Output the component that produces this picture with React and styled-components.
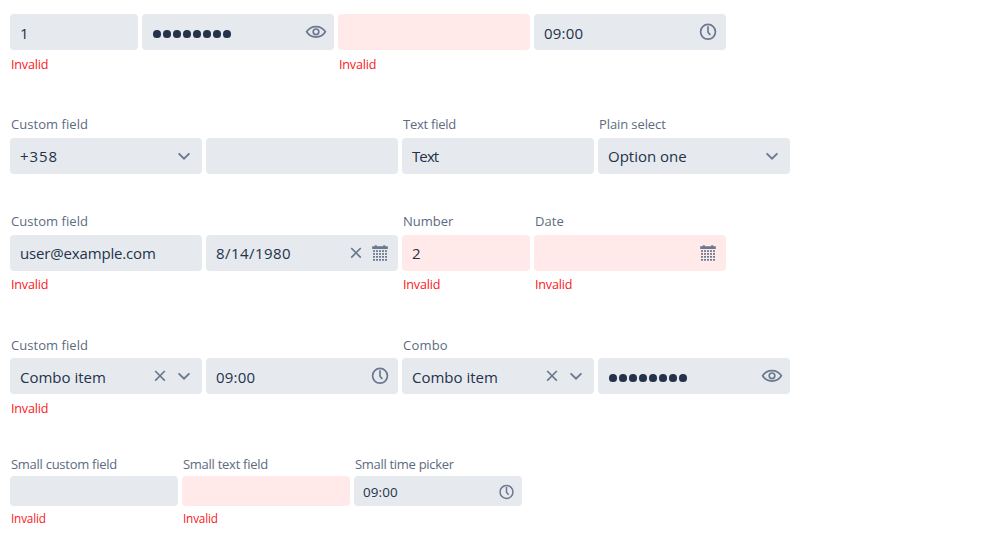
import React from "react";
import styled, { createGlobalStyle } from "styled-components";

const GlobalStyle = createGlobalStyle`
  body { margin: 0; background: #fff; font-family: "Open Sans", "Noto Sans", sans-serif; }
`;

const Page = styled.main`
  box-sizing: border-box;
  height: 546px;
  padding: 14px 10px 0;
  overflow: hidden;
`;

const Row = styled.div`
  display: flex;
  gap: 4px;
  height: ${(p) => p.$height}px;
`;

const Field = styled.div`
  display: flex;
  flex-direction: column;
  width: ${(p) => p.$width}px;
`;

const Label = styled.label`
  height: ${(p) => p.$height}px;
  padding-left: 1px;
  font-size: 13px;
  line-height: 20px;
  letter-spacing: ${(p) => p.$spacing || 0}px;
  color: #5d6b81;
  white-space: nowrap;
`;

const InputBox = styled.div`
  display: flex;
  flex: none;
  align-items: center;
  box-sizing: border-box;
  height: ${(p) => (p.$small ? 30 : 36)}px;
  padding: 0 ${(p) => (p.$small ? "5px 0 9px" : "6px 0 10px")};
  border-radius: 4px;
  background: ${(p) => (p.$invalid ? "#ffeae9" : "#e6eaef")};
  color: #6b788e;
`;

const Value = styled.span`
  flex: 1;
  padding-top: ${(p) => p.$drop}px;
  font-size: ${(p) => (p.$small ? 13.4 : 15)}px;
  line-height: 20px;
  letter-spacing: ${(p) => p.$spacing || 0}px;
  color: #24324a;
  white-space: nowrap;
`;

const Dots = styled.span`
  display: flex;
  flex: 1;
  gap: 2.3px;
  padding: 4px 0 0 1px;
`;

const Dot = styled.i`
  width: 7.7px;
  height: 7.7px;
  border-radius: 50%;
  background: #24324a;
`;

const ErrorText = styled.div`
  padding: ${(p) => p.$gap}px 0 0 1px;
  font-size: ${(p) => (p.$small ? 11.8 : 12.6)}px;
  line-height: 18px;
  letter-spacing: -0.2px;
  color: #fb1822;
`;

const Icon = styled.svg`
  flex: none;
  width: ${(p) => p.$size || 24}px;
  height: ${(p) => p.$size || 24}px;
  fill: none;
  stroke: currentColor;
  stroke-width: 1.7;
`;

const Clock = ({ small }) => (
  <Icon $size={small ? 21 : 24} viewBox="0 0 24 24">
    <circle cx="12" cy={small ? 12.5 : 11.8} r="7.4" />
    <path d={small ? "M12 6.9v6l2.4 2.8" : "M12 6.2v6l2.4 2.8"} />
  </Icon>
);

const Cross = () => (
  <Icon viewBox="0 0 24 24">
    <path d="M7.2 7l9.6 9.6M16.8 7l-9.6 9.6" />
  </Icon>
);

const Chevron = () => (
  <Icon viewBox="0 0 24 24">
    <path d="M6.6 9.4l5.4 5.2 5.4-5.2" strokeWidth="1.9" />
  </Icon>
);

const Eye = () => (
  <Icon viewBox="0 0 24 24">
    <path d="M2.6 11.8C7 4.8 17 4.8 21.4 11.8C17 18.8 7 18.8 2.6 11.8z" />
    <circle cx="12" cy="11.8" r="2.8" />
  </Icon>
);

const Calendar = () => (
  <Icon viewBox="0 0 24 24">
    <g fill="currentColor" stroke="none">
      <path d="M4.2 5.2h2.6V4.2h2v1h6.4V4.2h2v1h2.6v2.9H4.2z" />
      {[9.2, 12.1, 15, 18].map((y) =>
        [5, 8, 11, 14, 17].map((x) => <rect key={x + "-" + y} x={x} y={y} width="2" height="1.7" />)
      )}
    </g>
  </Icon>
);

const icons = { clock: Clock, cross: Cross, chevron: Chevron, eye: Eye, calendar: Calendar };

const rows = [
  {
    height: 100, label: 0, drop: 1, gap: 6,
    fields: [
      { width: 128, value: "1", error: true },
      { width: 192, password: true, icons: ["eye"] },
      { width: 192, invalid: true, error: true },
      { width: 192, value: "09:00", spacing: 0.2, icons: ["clock"] },
    ],
  },
  {
    height: 97, label: 24, drop: 0, gap: 5,
    fields: [
      { width: 192, label: "Custom field", labelSpacing: 0.05, value: "+358", spacing: 0.9, icons: ["chevron"] },
      { width: 192 },
      { width: 192, label: "Text field", labelSpacing: -0.25, value: "Text", spacing: -0.9 },
      { width: 192, label: "Plain select", labelSpacing: -0.1, value: "Option one", icons: ["chevron"] },
    ],
  },
  {
    height: 124, label: 24, drop: 0, gap: 5,
    fields: [
      { width: 192, label: "Custom field", labelSpacing: 0.05, value: "user@example.com", spacing: -0.16, error: true },
      { width: 192, value: "8/14/1980", spacing: 0.45, icons: ["cross", "calendar"] },
      { width: 128, label: "Number", value: "2", invalid: true, error: true },
      { width: 192, label: "Date", labelSpacing: 0.1, invalid: true, error: true, icons: ["calendar"] },
    ],
  },
  {
    height: 119, label: 23, drop: 1, gap: 6,
    fields: [
      { width: 192, label: "Custom field", labelSpacing: 0.05, value: "Combo item", error: true, icons: ["cross", "chevron"] },
      { width: 192, value: "09:00", spacing: 0.2, icons: ["clock"] },
      { width: 192, label: "Combo", labelSpacing: 0.2, value: "Combo item", icons: ["cross", "chevron"] },
      { width: 192, password: true, icons: ["eye"] },
    ],
  },
  {
    height: 80, label: 22, drop: 2, gap: 3, small: true,
    fields: [
      { width: 168, label: "Small custom field", labelSpacing: -0.27, error: true },
      { width: 168, label: "Small text field", labelSpacing: -0.27, invalid: true, error: true },
      { width: 168, label: "Small time picker", labelSpacing: -0.3, value: "09:00", spacing: 0.15, icons: ["clock"] },
    ],
  },
];

function FormField({ row, field }) {
  return (
    <Field $width={field.width}>
      <Label $height={row.label} $spacing={field.labelSpacing}>{field.label}</Label>
      <InputBox $small={row.small} $invalid={field.invalid}>
        {field.password ? (
          <Dots>{Array.from({ length: 8 }, (_, i) => <Dot key={i} />)}</Dots>
        ) : (
          <Value $small={row.small} $drop={row.drop} $spacing={field.spacing}>{field.value}</Value>
        )}
        {(field.icons || []).map((name) => {
          const Glyph = icons[name];
          return <Glyph key={name} small={row.small} />;
        })}
      </InputBox>
      {field.error && <ErrorText $small={row.small} $gap={row.gap}>Invalid</ErrorText>}
    </Field>
  );
}

export default function App() {
  return (
    <>
      <GlobalStyle />
      <Page>
        {rows.map((row, r) => (
          <Row key={r} $height={row.height}>
            {row.fields.map((field, f) => <FormField key={f} row={row} field={field} />)}
          </Row>
        ))}
      </Page>
    </>
  );
}
